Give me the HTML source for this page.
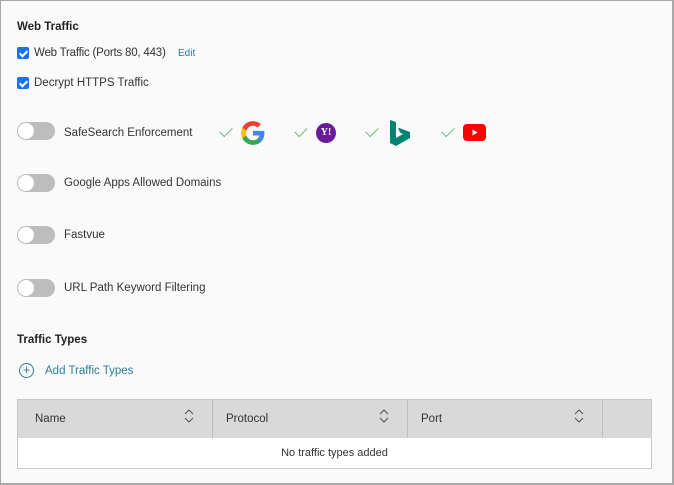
<!DOCTYPE html>
<html><head><style>
*{box-sizing:border-box;margin:0;padding:0}
body{width:674px;height:485px;background:#fafafa;font-family:"Liberation Sans",sans-serif;font-size:11.5px;color:#333;position:relative;overflow:hidden}
.frame{position:absolute;left:0;top:0;width:674px;height:485px;border:1px solid #a8a8a8;border-right-width:2px;border-bottom-width:2px}
.a{position:absolute;white-space:nowrap}
.h{font-weight:bold;font-size:11.5px;color:#222}
.cb{position:absolute;width:12px;height:12px;background:#1a73e8;border-radius:2px}
.cb:after{content:"";position:absolute;left:4px;top:1.5px;width:3px;height:6px;border:solid #fff;border-width:0 2px 2px 0;transform:rotate(45deg)}
.tg{position:absolute;left:17px;width:38px;height:18px;background:#bdbdbd;border-radius:9px}
.tg:after{content:"";position:absolute;left:1px;top:1px;width:16px;height:16px;background:#fff;border-radius:50%}
.chk{position:absolute;width:12px;height:7px;border:solid #6cc07a;border-width:0 0 1.5px 1.5px;transform:rotate(-45deg)}
.tbl{position:absolute;left:17px;top:399px;width:635px;height:70px;border:1px solid #c8c8c8;background:#fff}
.th{position:absolute;top:0;height:38px;background:#d9d9d9;border-right:1px solid #bdbdbd}
.sort{position:absolute;top:9px}
</style></head><body>
<div class="frame"></div>
<div class="a h" style="left:17px;top:21px">Web Traffic</div>
<div class="cb" style="left:17px;top:47px"></div>
<div class="a" style="left:34px;top:47px;letter-spacing:-0.2px">Web Traffic (Ports 80, 443)</div>
<div class="a" style="left:178px;top:48px;font-size:10px;color:#2a7f95">Edit</div>
<div class="cb" style="left:17px;top:77px"></div>
<div class="a" style="left:34px;top:77px">Decrypt HTTPS Traffic</div>

<div class="tg" style="top:122px"></div>
<div class="a" style="left:64px;top:127px">SafeSearch Enforcement</div>
<div class="chk" style="left:220px;top:127px"></div>
<svg class="a" style="left:240px;top:120px" width="26" height="26" viewBox="0 0 48 48"><path fill="#4285F4" d="M45 24.5c0-1.6-.1-3.1-.4-4.5H24v8.5h11.8c-.5 2.8-2.1 5.1-4.4 6.7v5.5h7.1c4.2-3.8 6.5-9.5 6.5-16.2z"/><path fill="#34A853" d="M24 46c5.9 0 10.9-2 14.5-5.3l-7.1-5.5c-2 1.3-4.5 2.1-7.4 2.1-5.7 0-10.6-3.8-12.3-9H4.4v5.7C8 41 15.4 46 24 46z"/><path fill="#FBBC05" d="M11.7 28.3c-.4-1.3-.7-2.8-.7-4.3s.3-3 .7-4.3V14H4.4C2.9 17 2 20.4 2 24s.9 7 2.4 10z"/><path fill="#EA4335" d="M24 10.7c3.2 0 6.1 1.1 8.4 3.3l6.3-6.3C34.9 4.2 29.9 2 24 2 15.4 2 8 7 4.4 14l7.3 5.7c1.7-5.2 6.6-9 12.3-9z"/></svg>
<div class="chk" style="left:295px;top:127px"></div>
<div class="a" style="left:316px;top:123px;width:20px;height:20px;border-radius:50%;background:#6a1b9a;color:#fff;font-family:'Liberation Serif',serif;font-weight:bold;font-size:10px;line-height:20px;text-align:center">Y!</div>
<div class="chk" style="left:366px;top:127px"></div>
<svg class="a" style="left:389px;top:120px" width="22" height="26" viewBox="0 0 22 26"><path fill="#008373" d="M1 0l6 2v16l7-4-3-1.5-2-5 12 4.5v6L7 26l-6-3z"/></svg>
<div class="chk" style="left:442px;top:127px"></div>
<div class="a" style="left:463px;top:124px;width:23px;height:17px;background:#f00;border-radius:4px"></div>
<svg class="a" style="left:463px;top:124px" width="23" height="17"><path d="M9.5 5.5l5 3-5 3z" fill="#fff"/></svg>

<div class="tg" style="top:174px"></div>
<div class="a" style="left:64px;top:177px">Google Apps Allowed Domains</div>
<div class="tg" style="top:226px"></div>
<div class="a" style="left:64px;top:229px">Fastvue</div>
<div class="tg" style="top:279px"></div>
<div class="a" style="left:64px;top:282px">URL Path Keyword Filtering</div>

<div class="a h" style="left:17px;top:334px">Traffic Types</div>
<div class="a" style="left:19px;top:363px;width:15px;height:15px;border:1px solid #2a7f95;border-radius:50%;color:#2a7f95;font-size:13px;line-height:12px;text-align:center">+</div>
<div class="a" style="left:45px;top:365px;color:#2a7f95">Add Traffic Types</div>

<div class="tbl">
<div class="th" style="left:0;width:195px"><span class="a" style="left:17px;top:13px">Name</span><svg class="sort" style="left:166px" width="10" height="14"><path d="M1 5l4-4 4 4M1 9l4 4 4-4" fill="none" stroke="#555" stroke-width="1"/></svg></div>
<div class="th" style="left:195px;width:195px"><span class="a" style="left:13px;top:13px">Protocol</span><svg class="sort" style="left:166px" width="10" height="14"><path d="M1 5l4-4 4 4M1 9l4 4 4-4" fill="none" stroke="#555" stroke-width="1"/></svg></div>
<div class="th" style="left:390px;width:195px"><span class="a" style="left:13px;top:13px">Port</span><svg class="sort" style="left:166px" width="10" height="14"><path d="M1 5l4-4 4 4M1 9l4 4 4-4" fill="none" stroke="#555" stroke-width="1"/></svg></div>
<div class="th" style="left:585px;width:48px;border-right:0"></div>
<div class="a" style="left:0;width:633px;top:47px;text-align:center;font-size:11px">No traffic types added</div>
</div>
</body></html>
